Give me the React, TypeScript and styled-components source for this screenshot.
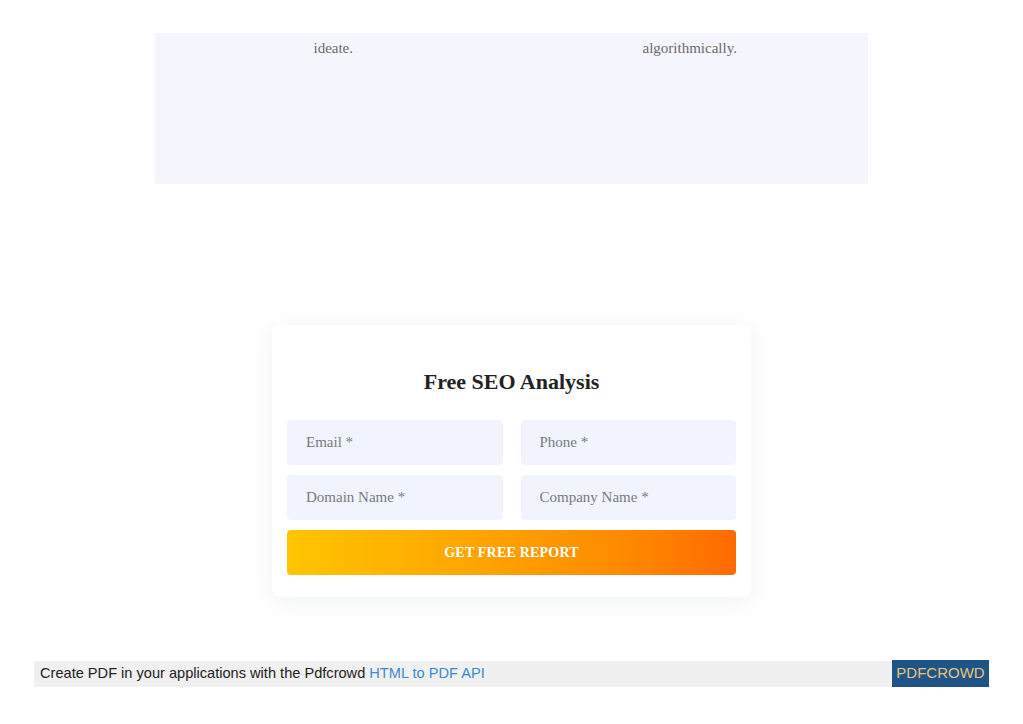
import React from "react";
import styled, { createGlobalStyle } from "styled-components";

const GlobalStyle = createGlobalStyle`
  html, body {
    margin: 0;
    padding: 0;
    background: #fff;
  }
  body {
    font-family: "Liberation Serif", "Times New Roman", serif;
  }
`;

const Page = styled.div`
  width: 1023px;
  height: 724px;
  padding-top: 33px;
  box-sizing: border-box;
  display: flex;
  flex-direction: column;
  align-items: center;
`;

const Features = styled.section`
  width: 713px;
  height: 151px;
  background: #f4f5fd;
  display: grid;
  grid-template-columns: 1fr 1fr;
  padding-top: 7px;
  box-sizing: border-box;
`;

const FeatureText = styled.p`
  margin: 0;
  text-align: center;
  font-size: 15px;
  line-height: 17px;
  color: #6b6b6b;
`;

const Card = styled.form`
  margin-top: 141px;
  width: 479px;
  box-sizing: border-box;
  padding: 44px 15px 22px;
  background: #fff;
  border-radius: 8px;
  box-shadow: 0 4px 24px rgba(40, 50, 90, 0.07);
`;

const Title = styled.h2`
  margin: 0 0 25px;
  text-align: center;
  font-size: 22px;
  line-height: 26px;
  font-weight: 700;
  color: #222;
`;

const Fields = styled.div`
  display: grid;
  grid-template-columns: minmax(0, 1fr) minmax(0, 1fr);
  column-gap: 18px;
  row-gap: 10px;
`;

const Field = styled.input`
  width: 100%;
  min-width: 0;
  height: 45px;
  box-sizing: border-box;
  border: none;
  outline: none;
  border-radius: 4px;
  background: #f1f4fd;
  padding: 0 19px;
  font-family: "Liberation Serif", "Times New Roman", serif;
  font-size: 15px;
  color: #333;
  &::placeholder {
    color: #777a80;
  }
`;

const Submit = styled.button`
  margin-top: 10px;
  width: 100%;
  height: 45px;
  border: none;
  border-radius: 4px;
  background: linear-gradient(90deg, #ffc500 0%, #fea600 40%, #ff8a00 75%, #ff6a00 100%);
  color: #fff;
  font-family: "Liberation Serif", "Times New Roman", serif;
  font-size: 14px;
  font-weight: 700;
  letter-spacing: 0.2px;
  cursor: pointer;
`;

const PromoBar = styled.footer`
  margin-top: 64px;
  width: 955px;
  height: 26px;
  display: flex;
  align-items: stretch;
  background: #f0f0f0;
  font-family: "Liberation Sans", Arial, sans-serif;
  font-size: 14.6px;
`;

const PromoText = styled.div`
  flex: 1;
  display: flex;
  align-items: center;
  padding-left: 6px;
  padding-bottom: 2px;
  color: #222;
  white-space: pre;
  a {
    color: #3b88d6;
    text-decoration: none;
  }
`;

const Badge = styled.a`
  width: 97px;
  margin-top: -1px;
  display: flex;
  align-items: center;
  justify-content: center;
  padding-bottom: 2px;
  background: #1f5486;
  color: #e9c37e;
  text-decoration: none;
  font-size: 15px;
`;

export default function App() {
  return (
    <>
      <GlobalStyle />
      <Page>
        <Features>
          <FeatureText>ideate.</FeatureText>
          <FeatureText>algorithmically.</FeatureText>
        </Features>

        <Card onSubmit={(e) => e.preventDefault()}>
          <Title>Free SEO Analysis</Title>
          <Fields>
            <Field placeholder="Email *" />
            <Field placeholder="Phone *" />
            <Field placeholder="Domain Name *" />
            <Field placeholder="Company Name *" />
          </Fields>
          <Submit type="submit">GET FREE REPORT</Submit>
        </Card>

        <PromoBar>
          <PromoText>
            Create PDF in your applications with the Pdfcrowd <a href="#">HTML to PDF API</a>
          </PromoText>
          <Badge href="#">PDFCROWD</Badge>
        </PromoBar>
      </Page>
    </>
  );
}
